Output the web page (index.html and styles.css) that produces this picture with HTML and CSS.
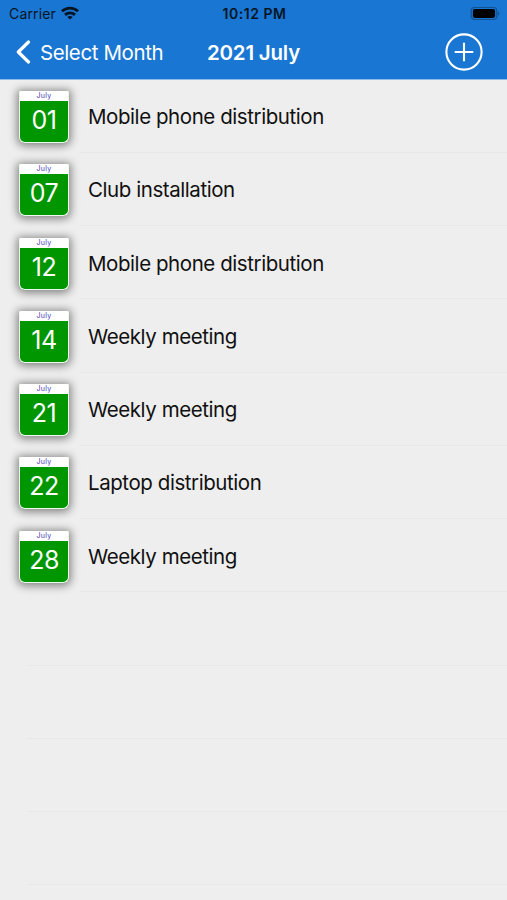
FILE: index.html
```
<!DOCTYPE html>
<html lang="en">
<head>
    <meta charset="UTF-8">
    <meta name="viewport" content="width=device-width, initial-scale=1.0">
    <title>2021 July</title>
    <link rel="stylesheet" href="styles.css">
</head>
<body>

    <header class="header">
        <div class="status-bar">
            <div class="carrier">
                <span>Carrier</span>
                <svg class="wifi" viewBox="0 0 18 14" width="18" height="14">
                    <g fill="none" stroke="#061525" stroke-width="2.9">
                        <path d="M1 5.3 C5.5 1.1 12.5 1.1 17 5.3"/>
                        <path d="M4 8.9 C7 6.2 11 6.2 14 8.9"/>
                    </g>
                    <path d="M6.3 10.9 C7.9 9.6 10.1 9.6 11.7 10.9 L9 13.6 Z" fill="#061525"/>
                </svg>
            </div>
            <span class="time">10:12 PM</span>
            <svg class="battery" viewBox="0 0 30 14" width="30" height="14">
                <rect x="1.2" y="0.5" width="25.6" height="12" rx="3.5" fill="none" stroke="#115293" stroke-width="1.2"/>
                <rect x="2.9" y="2.1" width="22.2" height="8.8" rx="1.8" fill="#000"/>
                <path d="M28 4.5 C29.8 5.3 29.8 7.7 28 8.5 Z" fill="#115293"/>
            </svg>
        </div>
        <nav class="nav-bar">
            <a class="back">
                <svg viewBox="0 0 16 24" width="16" height="24">
                    <path d="M13.5 2 L3.3 12 L13.5 22" fill="none" stroke="#fff" stroke-width="3.2" stroke-linecap="round" stroke-linejoin="round"/>
                </svg>
                <span>Select Month</span>
            </a>
            <h1>2021 July</h1>
            <svg class="add" viewBox="0 0 38 38" width="38" height="38">
                <g fill="none" stroke="#fff" stroke-width="2.1" stroke-linecap="round">
                    <circle cx="19" cy="19" r="17.6"/>
                    <path d="M19 10.5 V27.5 M10.5 19 H27.5"/>
                </g>
            </svg>
        </nav>
    </header>

    <ul class="events">
        <li class="event">
            <div class="date"><span class="month">July</span><span class="day">01</span></div>
            <span class="title">Mobile phone distribution</span>
        </li>
        <li class="event">
            <div class="date"><span class="month">July</span><span class="day">07</span></div>
            <span class="title">Club installation</span>
        </li>
        <li class="event">
            <div class="date"><span class="month">July</span><span class="day">12</span></div>
            <span class="title">Mobile phone distribution</span>
        </li>
        <li class="event">
            <div class="date"><span class="month">July</span><span class="day">14</span></div>
            <span class="title">Weekly meeting</span>
        </li>
        <li class="event">
            <div class="date"><span class="month">July</span><span class="day">21</span></div>
            <span class="title">Weekly meeting</span>
        </li>
        <li class="event">
            <div class="date"><span class="month">July</span><span class="day">22</span></div>
            <span class="title">Laptop distribution</span>
        </li>
        <li class="event">
            <div class="date"><span class="month">July</span><span class="day">28</span></div>
            <span class="title">Weekly meeting</span>
        </li>
        <li class="event empty"></li>
        <li class="event empty"></li>
        <li class="event empty"></li>
        <li class="event empty"></li>
    </ul>

</body>
</html>
```
FILE: styles.css
```
* {
    box-sizing: border-box;
}
body {
    margin: 0;
    background-color: #eeeeee;
    color: #111;
    font-family: Inter, sans-serif;
}
.header {
    height: 79.6px;
    border-bottom: 1px solid #8dbbec;
    background-color: #1976d2;
}
.status-bar {
    display: grid;
    grid-template-columns: 1fr auto 1fr;
    align-items: center;
    height: 27px;
    padding: 0 7px 0 9px;
    font-size: 14px;
    color: #061525;
}
.carrier {
    display: flex;
    align-items: center;
    gap: 5px;
    letter-spacing: 0.15px;
}
.wifi {
    margin-top: -2px;
}
.time {
    font-size: 14px;
    font-weight: 600;
    letter-spacing: 0.55px;
}
.battery {
    justify-self: end;
}
.nav-bar {
    display: grid;
    grid-template-columns: 1fr auto 1fr;
    align-items: center;
    height: 50px;
    padding: 0 24px;
    color: #fff;
}
.back {
    display: flex;
    align-items: center;
    gap: 9px;
    margin-left: -9px;
    font-size: 20.5px;
    letter-spacing: -0.4px;
    white-space: nowrap;
}
.nav-bar h1 {
    margin: 0;
    font-size: 20.5px;
    font-weight: 600;
    letter-spacing: -0.2px;
}
.add {
    justify-self: end;
}
.events {
    margin: 0;
    padding: 0;
    list-style: none;
}
.event {
    display: flex;
    align-items: center;
    height: 73.25px;
    padding: 2px 0 0 19px;
    /* separator starts at the text, not at the icon */
    background: linear-gradient(#e7e7e8, #e7e7e8) 80px 100% no-repeat;
    background-size: 100% 1px;
}
.event.empty {
    background-position: 27px 100%;
}
.date {
    display: flex;
    flex-direction: column;
    width: 50px;
    height: 52px;
    margin-right: 19px;
    border: 1px solid #eefaee;
    border-top: 0;
    border-radius: 1px 1px 6px 6px;
    background-color: #009600;
    box-shadow: 0 1px 8px 2px rgba(0, 0, 0, 0.45);
    text-align: center;
}
.month {
    height: 10px;
    background-color: #fff;
    color: #4338b8;
    font-size: 7px;
    line-height: 10px;
    letter-spacing: 0.3px;
}
.day {
    color: #fff;
    font-size: 25px;
    letter-spacing: -0.5px;
    line-height: 38px;
}
.title {
    font-size: 20.5px;
    line-height: 26px;
    letter-spacing: -0.43px;
    white-space: nowrap;
}
```
